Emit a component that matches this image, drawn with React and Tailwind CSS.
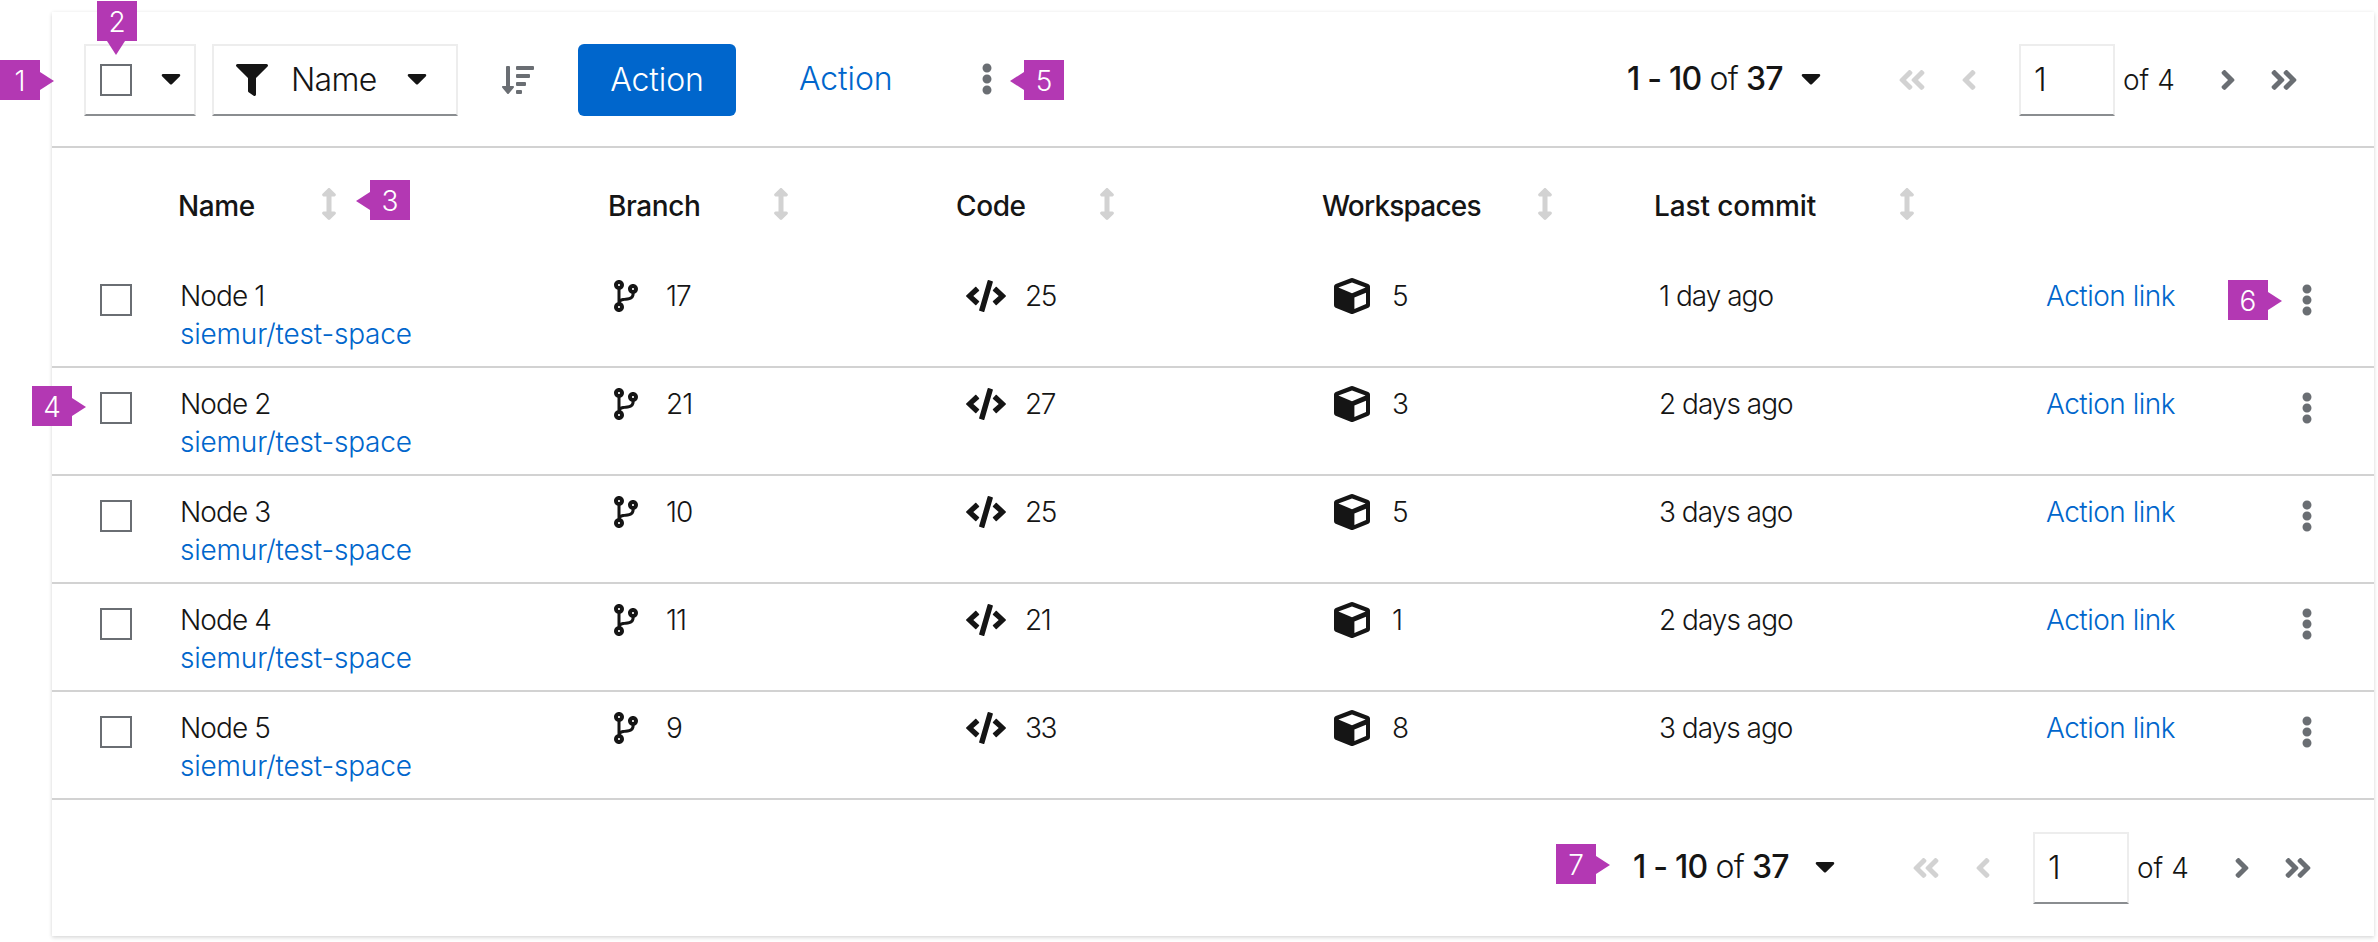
import React from 'react';
import {
  FaAngleDoubleLeft,
  FaAngleDoubleRight,
  FaAngleLeft,
  FaAngleRight,
  FaArrowsAltV,
  FaCaretDown,
  FaCode,
  FaCodeBranch,
  FaEllipsisV,
  FaFilter,
  FaSortAmountDown,
} from 'react-icons/fa';

const GRID = 'grid grid-cols-[126px_430px_348px_366px_332px_386px_250px_84px]';

const columns = [
  { label: 'Name', width: 'w-[143px]', tracking: 'tracking-[-0.4px]' },
  { label: 'Branch', width: 'w-[165px]', tracking: 'tracking-[-0.4px]' },
  { label: 'Code', width: 'w-[143px]', tracking: 'tracking-[-0.4px]' },
  { label: 'Workspaces', width: 'w-[215px]', tracking: 'tracking-[-0.8px]' },
  { label: 'Last commit', width: 'w-[245px]', tracking: 'tracking-[-0.1px]' },
];

const rows = [
  { name: 'Node 1', branch: 17, code: 25, workspaces: 5, commit: '1 day ago', callout: '6' },
  { name: 'Node 2', branch: 21, code: 27, workspaces: 3, commit: '2 days ago', rowCallout: '4' },
  { name: 'Node 3', branch: 10, code: 25, workspaces: 5, commit: '3 days ago' },
  { name: 'Node 4', branch: 11, code: 21, workspaces: 1, commit: '2 days ago' },
  { name: 'Node 5', branch: 9, code: 33, workspaces: 8, commit: '3 days ago' },
];

const tips = {
  right: { cls: 'left-full top-[12px] h-[18px] w-[14px]', box: '0 0 14 18', points: '0,0 14,9 0,18' },
  left: { cls: 'right-full top-[12px] h-[18px] w-[14px]', box: '0 0 14 18', points: '14,0 0,9 14,18' },
  down: { cls: 'top-full left-[10px] h-[14px] w-[18px]', box: '0 0 18 14', points: '0,0 9,14 18,0' },
};

function Callout({ n, tip, className }) {
  const t = tips[tip];
  return (
    <span
      className={`absolute flex h-10 w-10 items-center justify-center bg-[#b338b3] text-[28px] leading-10 font-light text-white ${className}`}
    >
      <span className="pt-px">{n}</span>
      <svg className={`absolute ${t.cls}`} viewBox={t.box} fill="#b338b3">
        <polygon points={t.points} />
      </svg>
    </span>
  );
}

function Checkbox() {
  return <span className="block h-8 w-8 shrink-0 border-2 border-[#6a6e73] bg-white" />;
}

function Cube() {
  return (
    <svg className="h-9 w-9" viewBox="0 0 36 36">
      <path
        fill="#151515"
        d="M16.8.3a3.4 3.4 0 0 1 2.4 0l15 5.6A2.8 2.8 0 0 1 36 8.500v18.700a2.800 2.800 0 0 1-1.600 2.500l-15 6.100a3.400 3.400 0 0 1-2.800 0l-15-6.100A2.800 2.800 0 0 1 0 27.200V8.500a2.800 2.800 0 0 1 1.800-2.600z"
      />
      <path fill="#fff" d="M18 4.600 31.600 9.600 18 15.200 4.400 9.600zM20.400 19.400 32 14.700v11.300l-11.600 4.900z" />
    </svg>
  );
}

function Pagination({ gap }) {
  return (
    <div className="flex h-[72px] items-center text-[#151515]">
      <span className="-mt-[2px] w-[157px] text-[32px] font-light whitespace-pre tracking-[-0.8px]">
        <b className="font-medium">1 - 10</b> of <b className="font-medium">37</b>
      </span>
      <FaCaretDown className={`mb-1 h-8 w-5 shrink-0 ${gap}`} />
      <FaAngleDoubleLeft className="ml-[77px] h-8 w-7 shrink-0 text-[#d2d2d2]" />
      <FaAngleLeft className="ml-[35px] h-8 w-4 shrink-0 text-[#d2d2d2]" />
      <span className="ml-[42px] flex h-[72px] w-24 shrink-0 items-center border-2 border-[#ededed] border-b-[#8a8d90] pl-[13px] pb-px text-[32px] font-light">
        1
      </span>
      <span className="ml-2 w-[52px] text-[28px] font-light whitespace-nowrap">of 4</span>
      <FaAngleRight className="ml-[45px] h-8 w-4 shrink-0 text-[#6a6e73]" />
      <FaAngleDoubleRight className="ml-[34px] h-8 w-7 shrink-0 text-[#6a6e73]" />
    </div>
  );
}

export default function App() {
  return (
    <div className="h-[942px] w-[2378px] overflow-hidden bg-white pt-3 pl-[52px] font-['Inter',sans-serif] text-[#151515]">
      <main className="relative h-[924px] w-[2322px] bg-white shadow-[0_2px_4px_rgba(3,3,3,0.12),0_0_4px_rgba(3,3,3,0.06)]">
        <header className="flex h-[136px] items-start border-b-2 border-[#d2d2d2] pt-8 pl-8">
          <div className="relative flex h-[72px] w-28 items-center border-2 border-[#ededed] border-b-[#8a8d90] pl-[14px]">
            <Checkbox />
            <FaCaretDown className="mb-1 ml-[29px] h-8 w-5" />
            <Callout n="2" tip="down" className="-top-[45px] left-[11px]" />
          </div>
          <div className="ml-4 flex h-[72px] w-[246px] items-center border-2 border-[#ededed] border-b-[#8a8d90] pl-[22px]">
            <FaFilter className="h-8 w-8 shrink-0" />
            <span className="-mt-px ml-[23px] w-[116px] text-[32px] font-light tracking-[-0.7px]">Name</span>
            <FaCaretDown className="mb-1 h-8 w-5 shrink-0" />
          </div>
          <FaSortAmountDown className="mt-5 ml-[44px] h-8 w-8 text-[#6a6e73]" />
          <button className="ml-[44px] h-[72px] w-[158px] rounded-[6px] bg-[#0066cc] pb-px text-[32px] font-light tracking-[-0.1px] text-white">
            Action
          </button>
          <a className="mt-[11px] ml-[63px] w-[180px] text-[32px] leading-[48px] font-light tracking-[-0.1px] text-[#0066cc]">
            Action
          </a>
          <div className="relative mt-5 ml-[2px]">
            <FaEllipsisV className="-mt-px mb-px h-8 w-3 text-[#6a6e73]" />
            <Callout n="5" tip="left" className="-top-1 left-[43px]" />
          </div>
          <div className="ml-[634px]">
            <Pagination gap="ml-[17px]" />
          </div>
          <Callout n="1" tip="right" className="top-12 -left-[52px]" />
        </header>

        <div className={`${GRID} h-28`}>
          <span />
          {columns.map((c) => (
            <div key={c.label} className="relative flex pt-[39px]">
              <span className={`${c.width} ${c.tracking} text-[28px] leading-[38px] font-medium whitespace-nowrap`}>
                {c.label}
              </span>
              <FaArrowsAltV className="mt-px h-8 w-4 text-[#d2d2d2]" />
              {c.label === 'Name' && <Callout n="3" tip="left" className="top-8 left-[192px]" />}
            </div>
          ))}
        </div>

        {rows.map((r) => (
          <div
            key={r.name}
            className={`${GRID} relative h-[108px] border-b-2 border-[#d2d2d2] text-[28px] leading-[38px] font-light`}
          >
            <div className="pt-6 pl-12">
              <Checkbox />
            </div>
            <div className="flex flex-col pt-[17px] pl-[2px]">
              <span className="tracking-[-0.9px]">{r.name}</span>
              <a className="tracking-[-0.2px] text-[#0066cc]">siemur/test-space</a>
            </div>
            <div className="flex pt-[17px] pl-[6px]">
              <FaCodeBranch className="mt-[3px] h-8 w-6" />
              <span className="ml-7 tracking-[-1px]">{r.branch}</span>
            </div>
            <div className="flex pt-[17px] pl-[10px]">
              <FaCode className="mt-[3px] h-8 w-10" />
              <span className="ml-[19px] tracking-[-1.5px]">{r.code}</span>
            </div>
            <div className="flex pt-[17px] pl-3">
              <span className="mt-px">
                <Cube />
              </span>
              <span className="ml-[22px]">{r.workspaces}</span>
            </div>
            <div className="pt-[17px] pl-[5px] tracking-[-1px]">{r.commit}</div>
            <a className="pt-[17px] pl-[6px] tracking-[-0.5px] text-[#0066cc]">Action link</a>
            <div className="relative pt-6 pl-[11px]">
              <FaEllipsisV className="h-8 w-3 text-[#6a6e73]" />
              {r.callout && <Callout n={r.callout} tip="right" className="top-5 -left-[62px]" />}
            </div>
            {r.rowCallout && <Callout n={r.rowCallout} tip="right" className="top-[18px] -left-5" />}
          </div>
        ))}

        <footer className="relative flex pt-8 pl-[1581px]">
          <Callout n="7" tip="right" className="top-11 left-[1504px]" />
          <Pagination gap="ml-[25px]" />
        </footer>
      </main>
    </div>
  );
}
